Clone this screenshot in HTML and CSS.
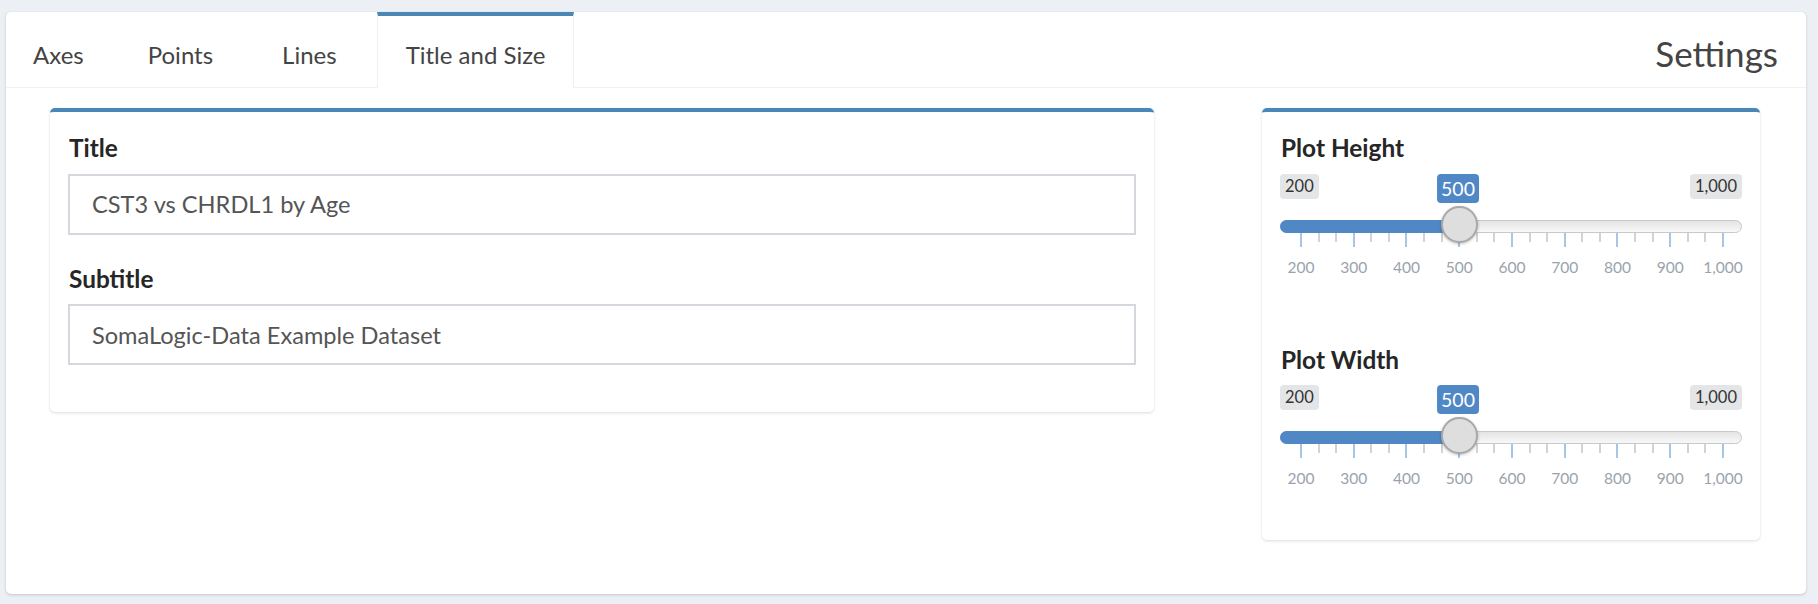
FILE: index.html
```html
<!DOCTYPE html>
<html lang="en">
<head>
<meta charset="utf-8">
<title>Settings</title>
<link rel="stylesheet" href="styles.css">
</head>
<body>
<div class="page">
  <div class="tabcard">
    <div class="tabhead">
      <ul class="tabs">
        <li class="tab first">Axes</li>
        <li class="tab">Points</li>
        <li class="tab">Lines</li>
        <li class="tab active">Title and Size</li>
      </ul>
      <div class="card-title">Settings</div>
    </div>
    <div class="tabbody">
      <div class="box box-left">
        <div class="field">
          <label class="lbl">Title</label>
          <input class="txt" type="text" value="CST3 vs CHRDL1 by Age">
        </div>
        <div class="field last">
          <label class="lbl">Subtitle</label>
          <input class="txt" type="text" value="SomaLogic-Data Example Dataset">
        </div>
      </div>
      <div class="box box-right">
        <div class="sgroup">
          <label class="lbl">Plot Height</label>
          <div class="slider">
            <div class="s-labels">
              <span class="s-minmax">200</span>
              <span class="s-minmax">1,000</span>
              <span class="s-val" style="left:178px">500</span>
            </div>
            <div class="s-track">
              <div class="s-fill" style="width:178px"></div>
              <div class="s-handle" style="left:178px"></div>
            </div>
            <div class="s-ticks">
              <i class="big"></i><i></i><i></i><i class="big"></i><i></i><i></i><i class="big"></i><i></i><i></i><i class="big"></i><i></i><i></i><i class="big"></i><i></i><i></i><i class="big"></i><i></i><i></i><i class="big"></i><i></i><i></i><i class="big"></i><i></i><i></i><i class="big"></i>
            </div>
            <div class="s-grid">
              <span>200</span><span>300</span><span>400</span><span>500</span><span>600</span><span>700</span><span>800</span><span>900</span><span>1,000</span>
            </div>
          </div>
        </div>
        <div class="sgroup last">
          <label class="lbl">Plot Width</label>
          <div class="slider">
            <div class="s-labels">
              <span class="s-minmax">200</span>
              <span class="s-minmax">1,000</span>
              <span class="s-val" style="left:178px">500</span>
            </div>
            <div class="s-track">
              <div class="s-fill" style="width:178px"></div>
              <div class="s-handle" style="left:178px"></div>
            </div>
            <div class="s-ticks">
              <i class="big"></i><i></i><i></i><i class="big"></i><i></i><i></i><i class="big"></i><i></i><i></i><i class="big"></i><i></i><i></i><i class="big"></i><i></i><i></i><i class="big"></i><i></i><i></i><i class="big"></i><i></i><i></i><i class="big"></i><i></i><i></i><i class="big"></i>
            </div>
            <div class="s-grid">
              <span>200</span><span>300</span><span>400</span><span>500</span><span>600</span><span>700</span><span>800</span><span>900</span><span>1,000</span>
            </div>
          </div>
        </div>
      </div>
    </div>
  </div>
</div>
</body>
</html>
```
FILE: styles.css
```css
* { box-sizing: border-box; }
html, body { margin: 0; padding: 0; }
body {
  background: #ecf0f5;
  font-family: Lato, "Open Sans", sans-serif;
  color: #444;
  width: 1818px;
  height: 604px;
  overflow: hidden;
}
.page {
  padding: 12px 12px 10px 6px;
}
.tabcard {
  background: #fff;
  border-radius: 5px;
  box-shadow: 0 1px 3px rgba(0,0,0,0.18);
  height: 582px;
}
.tabhead {
  display: flex;
  justify-content: space-between;
  align-items: stretch;
  height: 76px;
  border-bottom: 1px solid #f0f0f0;
}
.tabs {
  list-style: none;
  margin: 0;
  padding: 0;
  display: flex;
  gap: 11px;
}
.tab {
  height: 76px;
  padding: 4px 28px 0 28px;
  border-top: 4px solid transparent;
  border-left: 1px solid transparent;
  border-right: 1px solid transparent;
  display: flex;
  align-items: center;
  font-size: 24px;
  color: #444;
}
.tab.first {
  padding-left: 26px;
  padding-right: 23px;
}
.tab.active {
  background: #fff;
  border-top-color: #4a87b7;
  border-left-color: #f0f0f0;
  border-right-color: #f0f0f0;
  position: relative;
  z-index: 1;
}
.card-title {
  font-size: 35px;
  color: #444;
  padding: 6px 28px 0 0;
  display: flex;
  align-items: center;
}
.tabbody {
  display: grid;
  grid-template-columns: 1104fr 498fr;
  column-gap: 108px;
  align-items: start;
  padding: 20px 46px 0 44px;
}
.box {
  background: #fff;
  border-top: 4px solid #4a87b7;
  border-radius: 5px;
  box-shadow: 0 1px 3px rgba(0,0,0,0.14);
}
.box-left {
  padding: 18px 18px 47px 18px;
}
.box-right {
  padding: 18px 18px 52px 18px;
}
.lbl {
  display: block;
  font-weight: 700;
  font-size: 24.4px;
  line-height: 36.6px;
  color: #262626;
  margin-bottom: 7px;
  padding-left: 1px;
}
.field { margin-bottom: 26px; }
.field.last { margin-bottom: 0; }
.txt {
  display: block;
  width: 100%;
  height: 61px;
  margin: 0;
  border: 2px solid #d4d8de;
  border-radius: 0;
  padding: 0 22px;
  font-family: Lato, "Open Sans", sans-serif;
  font-size: 23.6px;
  color: #555;
  background: #fff;
  outline: none;
}
.sgroup { margin-bottom: 65px; }
.sgroup.last { margin-bottom: 0; }
.slider { position: relative; }
.s-labels {
  position: relative;
  height: 29px;
  display: flex;
  justify-content: space-between;
  align-items: flex-start;
}
.s-minmax {
  display: block;
  height: 25px;
  line-height: 25px;
  padding: 0 5px;
  background: #e4e5e7;
  border-radius: 4px;
  font-size: 16.5px;
  color: #333;
}
.s-val {
  position: absolute;
  top: 0;
  transform: translateX(-50%);
  height: 29px;
  line-height: 29px;
  padding: 0 4px;
  background: #5088c6;
  color: #fff;
  border-radius: 4px;
  font-size: 19.5px;
}
.s-track {
  position: relative;
  margin-top: 17px;
  height: 13px;
  border-radius: 7px;
  background: linear-gradient(#e4e4e4, #f8f8f8);
  border: 1px solid #c9c9c9;
}
.s-fill {
  position: absolute;
  left: -1px;
  top: -1px;
  height: 13px;
  background: #5088c6;
  border-radius: 7px 0 0 7px;
}
.s-handle {
  position: absolute;
  top: -15px;
  width: 37px;
  height: 37px;
  margin-left: -18.5px;
  border-radius: 50%;
  background: #dedede;
  border: 2px solid #a9a9a9;
  box-shadow: 0 1px 3px rgba(0,0,0,0.25);
}
.s-ticks {
  display: flex;
  justify-content: space-between;
  align-items: flex-start;
  margin: 0 18px 0 20px;
  height: 14px;
}
.s-ticks i {
  display: block;
  width: 2px;
  height: 9px;
  background: #d3d3d3;
}
.s-ticks i.big {
  height: 14px;
  background: #a9c5e6;
}
.s-grid {
  display: flex;
  justify-content: space-between;
  margin: 10px 18px 0 20px;
  height: 20px;
}
.s-grid span {
  display: flex;
  justify-content: center;
  width: 2px;
  white-space: nowrap;
  font-size: 15.5px;
  line-height: 20px;
  color: #9aa3ad;
}
```
